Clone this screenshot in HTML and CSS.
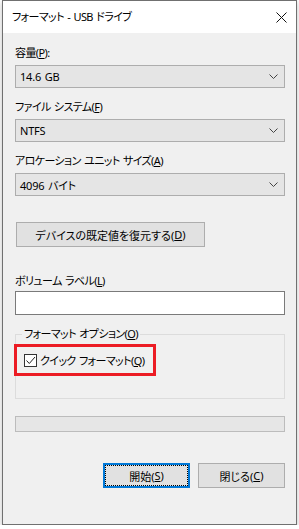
FILE: index.html
```html
<!DOCTYPE html>
<html>
<head>
  <title>フォーマット - USB ドライブ</title>
  <link rel="stylesheet" href="styles.css">
</head>
<body>
  <div class="window">
    <div class="titlebar">
      <span class="title">フォーマット - USB ドライブ</span>
      <svg class="close" width="11" height="11" viewBox="0 0 11 11">
        <path d="M0.5 0.5 L10.5 10.5 M10.5 0.5 L0.5 10.5" stroke="#111" stroke-width="1" fill="none"/>
      </svg>
    </div>

    <div class="content">
      <div class="field">
        <div class="label">容量(<u>P</u>):</div>
        <div class="combo">
          <span>14.6 GB</span>
          <svg width="9" height="5" viewBox="0 0 9 5"><path d="M0.5 0.5 L4.5 4.5 L8.5 0.5" stroke="#444" fill="none"/></svg>
        </div>
      </div>

      <div class="field">
        <div class="label">ファイル システム(<u>F</u>)</div>
        <div class="combo">
          <span>NTFS</span>
          <svg width="9" height="5" viewBox="0 0 9 5"><path d="M0.5 0.5 L4.5 4.5 L8.5 0.5" stroke="#444" fill="none"/></svg>
        </div>
      </div>

      <div class="field">
        <div class="label">アロケーション ユニット サイズ(<u>A</u>)</div>
        <div class="combo">
          <span>4096 バイト</span>
          <svg width="9" height="5" viewBox="0 0 9 5"><path d="M0.5 0.5 L4.5 4.5 L8.5 0.5" stroke="#444" fill="none"/></svg>
        </div>
      </div>

      <div class="btn restore">デバイスの既定値を復元する(<u>D</u>)</div>

      <div class="label volume-label">ボリューム ラベル(<u>L</u>)</div>
      <div class="textbox"></div>

      <div class="group">
        <div class="caption">フォーマット オプション(<u>O</u>)</div>
        <div class="highlight">
          <span class="checkbox">
            <svg width="11" height="11" viewBox="0 0 11 11"><path d="M1.5 5.5 L4.3 8.5 L10 2" stroke="#222" stroke-width="1" fill="none"/></svg>
          </span>
          <span>クイック フォーマット(<u>Q</u>)</span>
        </div>
      </div>

      <div class="progress"></div>

      <div class="actions">
        <div class="btn focused">開始(<u>S</u>)</div>
        <div class="btn">閉じる(<u>C</u>)</div>
      </div>
    </div>
  </div>
</body>
</html>
```

FILE: styles.css
```css
body {
  margin: 0;
  background-color: #fff;
  font-family: "Noto Sans", "Noto Sans CJK JP", sans-serif;
  font-size: 11px;
  letter-spacing: -0.6px;
  word-spacing: 1px;
  font-feature-settings: "palt";
  color: #000;
}

u {
  text-underline-offset: 1px;
}

.window {
  margin-left: 2px;
  width: 295px;
  height: 525px;
  box-sizing: border-box;
  border: 1px solid #707070;
  background-color: #f0f0f0;
  box-shadow: 0 2px 6px rgba(0, 0, 0, 0.25);
}

.titlebar {
  height: 32px;
  background-color: #fff;
  display: flex;
  align-items: center;
  justify-content: space-between;
  padding: 0 9px 0 9px;
}

.title {
  line-height: 16px;
}

.content {
  padding: 0 11px 0 12px;
  display: flex;
  flex-direction: column;
}

.field {
  display: flex;
  flex-direction: column;
  gap: 4px;
  margin-top: 11px;
}

.field:first-child {
  margin-top: 12px;
}

.label {
  line-height: 16px;
  height: 16px;
  white-space: nowrap;
}

.combo {
  height: 23px;
  box-sizing: border-box;
  border: 1px solid #adadad;
  background-color: #e5e5e5;
  display: flex;
  align-items: center;
  justify-content: space-between;
  padding: 0 6px 0 4px;
  letter-spacing: -0.2px;
}

.btn {
  height: 25px;
  box-sizing: border-box;
  border: 1px solid #adadad;
  background-color: #e1e1e1;
  display: flex;
  align-items: center;
  justify-content: center;
  letter-spacing: 0;
}

.restore {
  margin-top: 26px;
  margin-left: 1px;
  width: 189px;
}

.volume-label {
  margin-top: 26px;
}

.textbox {
  margin-top: 2px;
  height: 24px;
  box-sizing: border-box;
  border: 1px solid #7a7a7a;
  background-color: #fff;
}

.group {
  margin-top: 19px;
  height: 65px;
  box-sizing: border-box;
  border: 1px solid #dcdcdc;
}

.caption {
  margin: -9px 0 0 6px;
  padding: 0 2px;
  width: max-content;
  line-height: 16px;
  background-color: #f0f0f0;
}

.highlight {
  margin: 2px 0 0 -2px;
  width: 142px;
  height: 32px;
  box-sizing: border-box;
  border: 3px solid #ec1c24;
  display: flex;
  align-items: center;
  gap: 3px;
  padding-left: 7px;
  white-space: nowrap;
}

.checkbox {
  width: 13px;
  height: 13px;
  box-sizing: border-box;
  border: 1px solid #333;
  background-color: #fff;
  display: flex;
  align-items: center;
  justify-content: center;
}

.progress {
  margin-top: 17px;
  height: 16px;
  box-sizing: border-box;
  border: 1px solid #bcbcbc;
  background-color: #e6e6e6;
}

.actions {
  margin-top: 31px;
  display: flex;
  justify-content: flex-end;
  gap: 8px;
}

.actions .btn {
  width: 87px;
}

.btn.focused {
  border: 2px solid #0078d7;
  outline: 1px dotted #000;
  outline-offset: -3px;
}
```
